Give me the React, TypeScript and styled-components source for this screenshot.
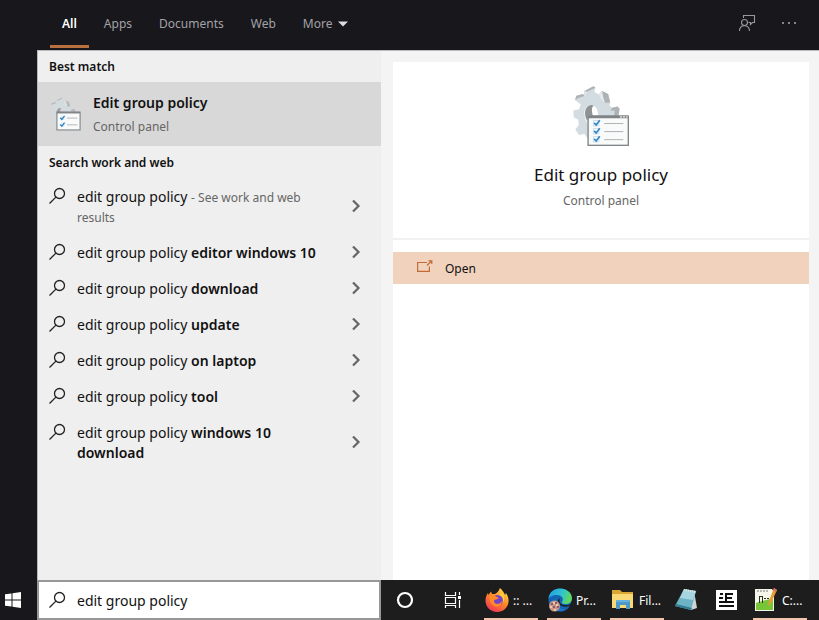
import React from "react";
import styled, { createGlobalStyle } from "styled-components";

const GlobalStyle = createGlobalStyle`
  * { box-sizing: border-box; }
  body { margin: 0; background: #18171c; font-family: "Noto Sans", "Open Sans", sans-serif; }
  button, input { font: inherit; }
`;

const Screen = styled.div`
  display: flex;
  flex-direction: column;
  min-height: 100vh;
  background: #18171c;
  color: #111;
`;

const TopBar = styled.header`
  display: flex;
  justify-content: space-between;
  height: 50px;
  padding: 0 22px 0 50px;
`;

const Tabs = styled.nav`
  display: flex;
  gap: 3px;
`;

const Tab = styled.button<{ $active?: boolean }>`
  display: flex;
  align-items: center;
  gap: 6px;
  height: 48px;
  padding: 2px 12px 0;
  border: 0;
  border-bottom: 3px solid ${(p) => (p.$active ? "#b9703f" : "transparent")};
  background: transparent;
  color: ${(p) => (p.$active ? "#fff" : "#a3a2a6")};
  font-size: 12px;
  font-weight: ${(p) => (p.$active ? 600 : 400)};
`;

const TopActions = styled.div`
  display: flex;
  align-items: center;
  gap: 25px;
  height: 46px;
`;

const IconButton = styled.button`
  display: flex;
  align-items: center;
  justify-content: center;
  padding: 0;
  border: 0;
  background: transparent;
`;

const Main = styled.main`
  display: flex;
  flex: 1;
  padding-left: 37px;
`;

const Results = styled.section`
  width: 344px;
  flex: none;
  border-top: 1px solid #b9b9bb;
  border-left: 1px solid #b9b9bb;
  background: #efefef;
`;

const SectionTitle = styled.h2`
  margin: 0;
  padding: 0 11px;
  font-size: 12px;
  font-weight: 600;
  line-height: 31px;
`;

const BestMatch = styled.button`
  display: flex;
  align-items: center;
  gap: 12px;
  width: 100%;
  height: 64px;
  margin-bottom: 1px;
  padding: 0 12px;
  border: 0;
  background: #d8d8d8;
  color: #111;
  text-align: left;
`;

const BestText = styled.span`
  display: flex;
  flex-direction: column;
  padding-top: 1px;
`;

const BestTitle = styled.span`
  font-size: 14px;
  font-weight: 600;
  line-height: 24px;
`;

const Muted = styled.span`
  color: #666;
  font-size: 12px;
  line-height: 24px;
`;

const List = styled.ul`
  margin: 0;
  padding: 1px 0 0;
  list-style: none;
`;

const Suggestion = styled.button`
  display: flex;
  align-items: center;
  width: 100%;
  padding: 8px 20px 8px 10px;
  border: 0;
  background: transparent;
  color: #111;
  font-size: 14px;
  line-height: 20px;
  text-align: left;
`;

const SuggestionText = styled.span`
  flex: 1;
  padding: 0 24px 0 11px;

  b { font-weight: 600; }
  small { color: #666; font-size: 12px; line-height: 16px; }
`;

const LeadIcon = styled.span`
  display: flex;
  align-self: flex-start;
`;

const Preview = styled.section`
  display: flex;
  flex: 1;
  padding: 11px 10px 0 12px;
  border-top: 1px solid #b9b9bb;
  background: #f4f4f4;
`;

const Card = styled.article`
  flex: 1;
  background: #fff;
`;

const Hero = styled.div`
  display: flex;
  flex-direction: column;
  align-items: center;
  height: 178px;
  padding-top: 23px;
  border-bottom: 2px solid #f1f1f1;
`;

const HeroTitle = styled.h1`
  margin: 14px 0 0;
  font-size: 17px;
  font-weight: 400;
  line-height: 28px;
`;

const OpenButton = styled.button`
  display: flex;
  align-items: center;
  gap: 12px;
  width: 100%;
  height: 32px;
  margin-top: 12px;
  padding: 0 24px;
  border: 0;
  background: #f0d2bd;
  color: #111;
  font-size: 12px;

  svg { margin-bottom: 4px; }
`;

const Taskbar = styled.footer`
  display: flex;
  height: 40px;
  background: #1d1d1d;
`;

const Start = styled(IconButton)`
  width: 37px;
  padding-right: 12px;
  background: #18171c;
`;

const SearchBox = styled.label`
  display: flex;
  align-items: center;
  gap: 11px;
  width: 344px;
  padding: 0 9px;
  border: 2px solid #979797;
  background: #fff;
`;

const SearchInput = styled.input`
  flex: 1;
  min-width: 0;
  padding: 0;
  border: 0;
  outline: 0;
  background: transparent;
  color: #111;
  font-size: 14px;
`;

const SystemButtons = styled.div`
  display: flex;

  button { width: 48px; }
`;

const Apps = styled.div`
  display: flex;
  gap: 9px;
  padding-left: 7px;
`;

const AppButton = styled.button<{ $running?: boolean }>`
  display: flex;
  align-items: center;
  gap: 4px;
  width: ${(p) => (p.$running ? "54px" : "31px")};
  padding: 2px 0 0 1px;
  border: 0;
  border-bottom: 2px solid ${(p) => (p.$running ? "#f5c4ac" : "transparent")};
  background: transparent;
  color: #fff;
  font-size: 12px;
  white-space: nowrap;

  svg { flex: none; }
`;

const PolicyIcon = ({ size, small }: { size: number; small?: boolean }) => (
  <svg width={size} height={Math.round(size * 1.09)} viewBox="42 30 170 185" aria-hidden="true">
    <g opacity={small ? 0.75 : 1}>
      <path d="M76 48 103 34 109 38 106 51 119 58 129 48 147 57 153 82 151 91 159 98 175 94 181 101 177 123 160 130 158 190 86 190 76 176 60 179 49 163 59 149 58 134 44 126 43 106 60 102 65 88 48 75 52 62 72 57 80 66Z" fill="#d3dce1" />
      <path d="M76 48 103 34 109 38 84 50 80 66 76 64ZM119 58 129 48 147 57 153 82 137 83 130 63ZM48 75 52 62 72 57 76 63 58 69ZM159 98 175 94 181 101 177 123 165 121 166 106 154 107Z" fill="#aeb2b5" />
      <path d="M119 58 129 48 132 65 137 83 127 75ZM76 48 84 50 80 66 76 64Z" fill="#e3e9ec" />
      <path d="M76 114C76 98 86 89 97 90C111 92 117 106 117 122L91 122 87 144C80 138 76 128 76 114Z" fill={small ? "#d8d8d8" : "#fff"} />
      <path d="M78 118C77 100 86 89 98 90L104 92C95 98 99 110 101 122H86V138C81 133 79 126 78 118Z" fill="#8f9396" />
    </g>
    {small ? (
      <g>
        <rect x="80" y="112" width="127" height="98" fill="#f9fafa" stroke="#808487" strokeWidth="6" />
        <path d="M80 115H207" stroke="#808487" strokeWidth="9" />
      </g>
    ) : (
      <g>
        <rect x="87" y="123" width="120" height="87" fill="#f9fafa" stroke="#808487" strokeWidth="4" />
        <path d="M87 125H207" stroke="#808487" strokeWidth="8" />
        <path d="M182 125h6M191 125h6M200 125h5" stroke="#e8e8e8" strokeWidth="4" />
      </g>
    )}
    {(small ? [143, 180] : [143, 167, 191]).map((y) => (
      <g key={y} fill="none">
        <path d={`M103 ${y - 7}h16v16h-16Z`} stroke="#bad2e4" strokeWidth="2" />
        <path
          d={small ? `M98 ${y} l9 9 15 -19` : `M105 ${y} l6 6 11 -14`}
          stroke="#3388c4"
          strokeWidth={small ? 8 : 5}
        />
        <path d={`M135 ${y + 2}H192`} stroke="#afb2b4" strokeWidth={small ? 5 : 3} />
      </g>
    ))}
  </svg>
);

const SearchIcon = () => (
  <svg width="18" height="18" viewBox="0 0 18 18" fill="none" stroke="#222" strokeWidth="1.3" aria-hidden="true">
    <circle cx="11.500" cy="6.500" r="5" />
    <path d="M7.900 10.100 1.500 16.500" />
  </svg>
);

const Chevron = () => (
  <svg width="10" height="14" viewBox="0 0 10 14" fill="none" stroke="#666" strokeWidth="2.200" aria-hidden="true">
    <path d="M2 .5 7.500 6 2 11.500" />
  </svg>
);

const FirefoxIcon = () => (
  <svg width="24" height="24" viewBox="0 0 24 24" aria-hidden="true">
    <defs>
      <linearGradient id="fox" x1="0.8" y1="0" x2="0.2" y2="1">
        <stop offset="0" stopColor="#ffe04b" />
        <stop offset="0.45" stopColor="#ff8b27" />
        <stop offset="1" stopColor="#f0305a" />
      </linearGradient>
    </defs>
    <path d="M15 0C17 2 19 4 20 7L21 5C23 8 24 11 23.5 14C22.8 20 18 24 12 24C5.500 24 .5 19 .5 12.500C.5 9.500 1.500 7 3 5L3.500 7 6 3.500 7 6 10 6C12 5 14 3 15 0Z" fill="url(#fox)" />
    <circle cx="12.500" cy="12.500" r="5.500" fill="#7444c8" />
    <path d="M5 8C8 6 10 8 12 9L14 10C12 12 9 11 9 13C9 17 15 17 17 13C17 19 11 20 8 17C5 15 4 11 5 8Z" fill="#ff8b27" />
    <path d="M14 7C18 8 19 12 17 15C20 13 20 8 17 5Z" fill="#ffd23d" />
  </svg>
);

const EdgeIcon = () => (
  <svg width="24" height="24" viewBox="0 0 24 24" aria-hidden="true">
    <defs>
      <linearGradient id="edge" x1="0" y1="0.2" x2="1" y2="0.5">
        <stop offset="0" stopColor="#229fe0" />
        <stop offset="0.55" stopColor="#30c3d2" />
        <stop offset="1" stopColor="#62d957" />
      </linearGradient>
    </defs>
    <circle cx="12" cy="12" r="11.500" fill="#1464b4" />
    <path d="M.5 11C1 4 6 .5 12 .5C19 .5 24 5 24 10C24 14 21 16 17.500 16C14 16 13 14.500 14.500 13C16 10 13 7 9 7C5 7 1 9 .5 11Z" fill="url(#edge)" />
    <path d="M12 10C10 15 13 18 21 17L24 15V17L22 18C15 20 9 17 10 12Z" fill="#1d1d1d" />
    <path d="M8 11C7 17 11 21 18 21.500C15 24 9 24 6 20C4 16 5 12 8 11Z" fill="#1976cb" />
    <circle cx="6.500" cy="18" r="5.500" fill="#c99587" />
    <path d="M3 15h2v2H3zM7 14h2v2H7zM5 18h2v2H5zM9 18h2v2H9z" fill="#8d5878" />
    <path d="M5 14h2v2H5zM2 18h2v2H2zM8 16h2v2H8zM6 21h2v2H6z" fill="#e9cf9d" />
  </svg>
);

const FolderIcon = () => (
  <svg width="24" height="24" viewBox="0 0 24 24" aria-hidden="true">
    <path d="M1 2H9L11 4H22V20H1Z" fill="#dca634" />
    <path d="M1 6H22V20H1Z" fill="#f9d975" />
    <path d="M5 12H19V21H15V17H9V21H5Z" fill="#4a99ca" />
    <path d="M5 12H19V14H5Z" fill="#65b3dc" />
  </svg>
);

const NotepadIcon = () => (
  <svg width="24" height="24" viewBox="0 0 24 24" aria-hidden="true">
    <path d="m20 3 3 17-6 2-4-5Z" fill="#cdd5d5" />
    <path d="M10 1 22 3 17 22 1 18Z" fill="#6eb3c5" />
    <path d="M10 1 22 3 19 12 6 10Z" fill="#a6d5df" />
    <path d="m1 18 16 4 1-2-16-4Z" fill="#347b95" />
    <path d="m10 2 12 2" stroke="#e2e5dd" strokeWidth="2" strokeDasharray="1 1" />
  </svg>
);

const NewsIcon = () => (
  <svg width="24" height="24" viewBox="0 0 24 24" aria-hidden="true">
    <path d="M2 2H23V22H2Z" fill="#fff" />
    <path d="M6 6h3M5 10h4M5 14h15M5 18h15M12 6h7M12 10h6M12 14h8M12 5v9" stroke="#111" strokeWidth="2" />
  </svg>
);

const EditorIcon = () => (
  <svg width="24" height="24" viewBox="0 0 24 24" aria-hidden="true">
    <path d="M1 1H18L20 4V23H1Z" fill="#f5f6e9" />
    <path d="M2 15C7 13 13 12 19 10V22H2Z" fill="#78c638" />
    <path d="M4 2V4M7 2V4M10 2V4M13 2V4" stroke="#777" />
    <path d="M5.500 8V15M5 8.500H8M8.500 8V15M10 10.500H12M13 10.500H15" stroke="#29371f" fill="none" />
    <path d="m20 0 3 2-6 13-3 3 1-5Z" fill="#e99c34" />
    <path d="m20 0 3 2-1 2-3-2Z" fill="#d46e65" />
  </svg>
);

const suggestions: { bold?: string; note?: string }[] = [
  { note: "- See work and web results" },
  { bold: "editor windows 10" },
  { bold: "download" },
  { bold: "update" },
  { bold: "on laptop" },
  { bold: "tool" },
  { bold: "windows 10 download" },
];

const apps = [
  { name: "Firefox", label: ":: ...", icon: <FirefoxIcon /> },
  { name: "Edge", label: "Pr...", icon: <EdgeIcon /> },
  { name: "File Explorer", label: "Fil...", icon: <FolderIcon /> },
  { name: "Notepad", icon: <NotepadIcon /> },
  { name: "News", icon: <NewsIcon /> },
  { name: "Editor", label: "C:...", icon: <EditorIcon /> },
];

export default function App() {
  return (
    <Screen>
      <GlobalStyle />
      <TopBar>
        <Tabs>
          <Tab $active>All</Tab>
          <Tab>Apps</Tab>
          <Tab>Documents</Tab>
          <Tab>Web</Tab>
          <Tab>
            More
            <svg width="10" height="6" viewBox="0 0 10 6" aria-hidden="true"><path d="M0 .5h10L5 5.500Z" fill="#ddd" /></svg>
          </Tab>
        </Tabs>
        <TopActions>
          <IconButton aria-label="Feedback">
            <svg width="18" height="18" viewBox="0 0 18 18" fill="none" stroke="#98979b" strokeWidth="1.1" aria-hidden="true">
              <path d="M5.500 4V1.500H16.500V8.500H14.500L12.500 10.500V8.500H10.500" />
              <circle cx="6.500" cy="8.500" r="3" />
              <path d="M1.500 17C1.500 13.500 3.500 11.700 6.500 11.700S11.500 13.500 11.500 17" />
            </svg>
          </IconButton>
          <IconButton aria-label="Options">
            <svg width="16" height="4" viewBox="0 0 16 4" fill="#858489" aria-hidden="true">
              <path d="M1 1h2v2H1zM7 1h2v2H7zM13 1h2v2h-2z" />
            </svg>
          </IconButton>
        </TopActions>
      </TopBar>
      <Main>
        <Results>
          <SectionTitle>Best match</SectionTitle>
          <BestMatch>
            <PolicyIcon size={31} small />
            <BestText>
              <BestTitle>Edit group policy</BestTitle>
              <Muted>Control panel</Muted>
            </BestText>
          </BestMatch>
          <SectionTitle>Search work and web</SectionTitle>
          <List>
            {suggestions.map((s, i) => (
              <li key={i}>
                <Suggestion>
                  <LeadIcon><SearchIcon /></LeadIcon>
                  <SuggestionText>
                    edit group policy {s.bold && <b>{s.bold}</b>}
                    {s.note && <small>{s.note}</small>}
                  </SuggestionText>
                  <Chevron />
                </Suggestion>
              </li>
            ))}
          </List>
        </Results>
        <Preview>
          <Card>
            <Hero>
              <PolicyIcon size={57} />
              <HeroTitle>Edit group policy</HeroTitle>
              <Muted>Control panel</Muted>
            </Hero>
            <OpenButton>
              <svg width="16" height="12" viewBox="0 0 16 12" fill="none" stroke="#c46c35" strokeWidth="1.200" aria-hidden="true">
                <path d="M10 2.500H.6V11.400H12.400V6.500M10 5.500 14.500 1M11.500 .8H14.800V4" />
              </svg>
              Open
            </OpenButton>
          </Card>
        </Preview>
      </Main>
      <Taskbar>
        <Start aria-label="Start">
          <svg width="16" height="16" viewBox="0 0 16 16" fill="#fff" aria-hidden="true">
            <path d="M0 2.300 6.500 1.400V7.500H0ZM7.500 1.200 16 0V7.500H7.500ZM0 8.500H6.500V14.600L0 13.700ZM7.500 8.500H16V16L7.500 14.800Z" />
          </svg>
        </Start>
        <SearchBox>
          <SearchIcon />
          <SearchInput aria-label="Search" defaultValue="edit group policy" />
        </SearchBox>
        <SystemButtons>
          <IconButton aria-label="Cortana">
            <svg width="18" height="18" viewBox="0 0 18 18" aria-hidden="true">
              <circle cx="9" cy="9" r="7" fill="none" stroke="#fff" strokeWidth="2.200" />
            </svg>
          </IconButton>
          <IconButton aria-label="Task view">
            <svg width="18" height="16" viewBox="0 0 18 16" fill="none" stroke="#fff" strokeWidth="1.200" aria-hidden="true">
              <path d="M1.500 0V3.500H11.500V0M1.500 5.500H11.500V11.500H1.500ZM1.500 16V13.500H11.500V16M15.500 0V3M15.500 8V16" />
              <path d="M14 4h3v3h-3z" fill="#fff" stroke="none" />
            </svg>
          </IconButton>
        </SystemButtons>
        <Apps>
          {apps.map((a) => (
            <AppButton key={a.name} $running={!!a.label} aria-label={a.name}>
              {a.icon}
              {a.label}
            </AppButton>
          ))}
        </Apps>
      </Taskbar>
    </Screen>
  );
}
